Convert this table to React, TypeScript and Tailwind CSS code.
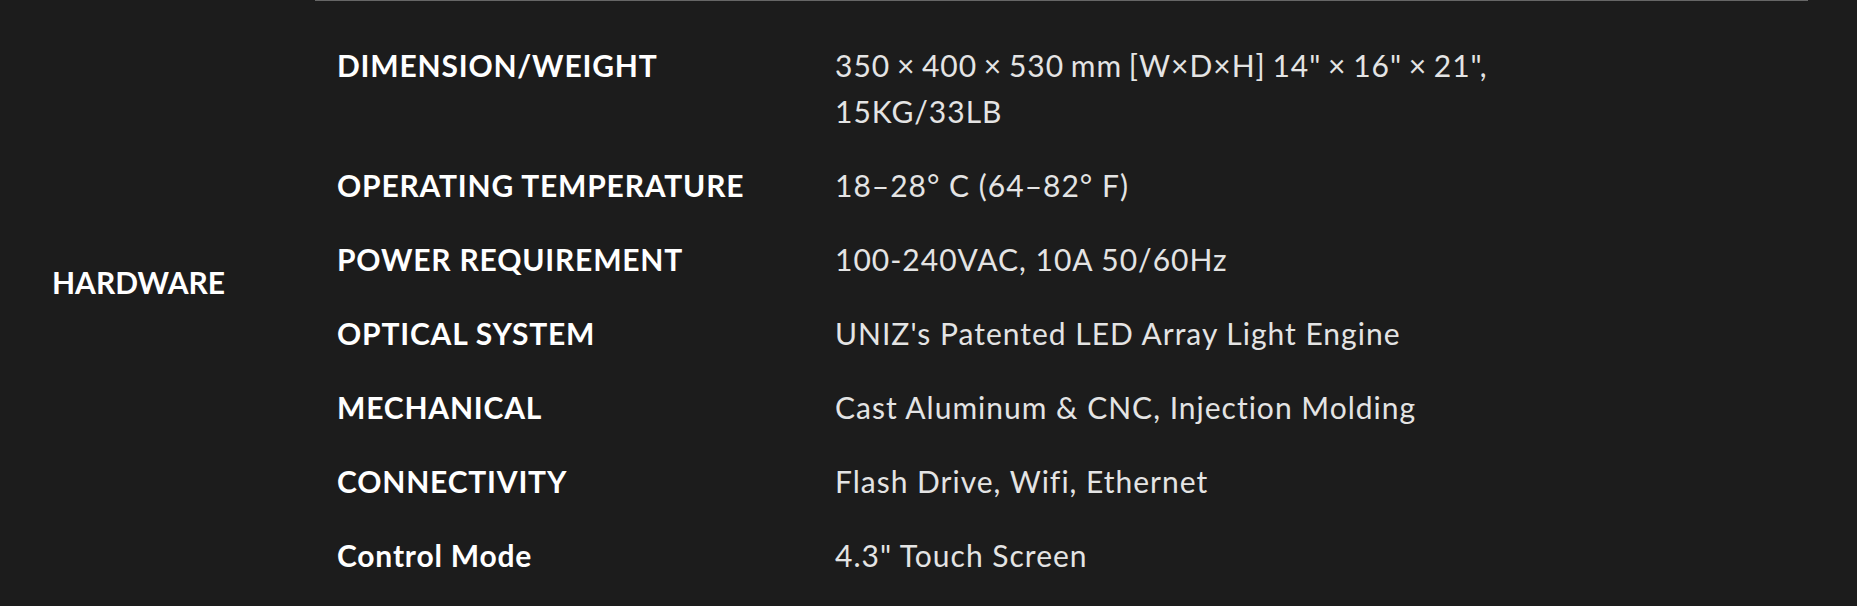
import React from "react";

const rows: { label: string; value: React.ReactNode; tight?: boolean }[] = [
  {
    label: "DIMENSION/WEIGHT",
    value: (
      <>
        350 × 400 × 530 mm [W×D×H] 14" × 16" × 21",
        <br />
        15KG/33LB
      </>
    ),
    tight: true,
  },
  { label: "OPERATING TEMPERATURE", value: "18–28° C (64–82° F)" },
  { label: "POWER REQUIREMENT", value: "100-240VAC, 10A 50/60Hz" },
  { label: "OPTICAL SYSTEM", value: "UNIZ's Patented LED Array Light Engine" },
  { label: "MECHANICAL", value: "Cast Aluminum & CNC, Injection Molding" },
  { label: "CONNECTIVITY", value: "Flash Drive, Wifi, Ethernet" },
  { label: "Control Mode", value: '4.3" Touch Screen' },
];

export default function App() {
  return (
    <div className="w-full h-[606px] overflow-hidden bg-[#1c1c1c] flex font-['Lato','Liberation_Sans',sans-serif] antialiased [font-variant-ligatures:none]">
      <div className="w-[315px] shrink-0 pl-[52px] pt-[259px]">
        <div className="text-[30px] leading-[46px] font-bold text-white">HARDWARE</div>
      </div>
      <div className="w-[1493px] shrink-0 border-t border-[#666666] pt-[27px]">
        {rows.map((r) => (
          <div key={r.label} className="flex py-[14px] pl-[22px] text-[30px] leading-[46px]">
            <div className="w-[498px] shrink-0 font-bold text-white tracking-[0.8px]">{r.label}</div>
            <div
              className={
                r.tight
                  ? "text-[#e4e4e4] font-normal tracking-[1px] [word-spacing:-2px]"
                  : "text-[#e4e4e4] font-normal tracking-[1px]"
              }
            >
              {r.value}
            </div>
          </div>
        ))}
      </div>
    </div>
  );
}
